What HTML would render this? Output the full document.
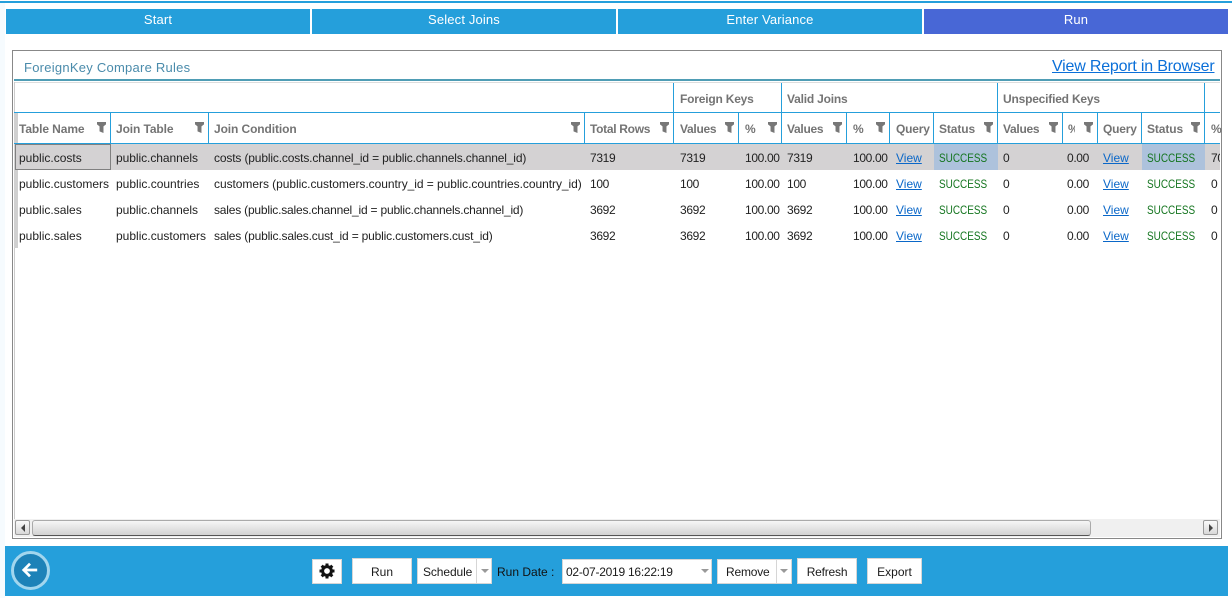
<!DOCTYPE html>
<html><head><meta charset="utf-8"><style>
html,body{margin:0;padding:0;background:#fff}
#p{position:relative;width:1232px;height:598px;overflow:hidden;background:#fff;font-family:"Liberation Sans",sans-serif;font-size:12px;color:#222}
#p div,#p span,#p a{position:absolute;white-space:nowrap}
.tab{top:9px;height:25px;line-height:21px;text-align:center;color:#fff;font-size:13px;letter-spacing:.15px;background:#259fdb}
.l{background:#259fdb;width:1px}
.h{font-weight:bold;color:#747474;top:121px;line-height:16px;letter-spacing:-.1px}
.g{font-weight:bold;color:#747474;top:91px;line-height:16px;letter-spacing:-.2px}
.f{top:122px;width:9px;height:11px;background:#777;clip-path:polygon(0 0,100% 0,100% 22%,72% 40%,72% 100%,28% 85%,28% 40%,0 22%)}
.c{line-height:16px;color:#222}
.d{line-height:16px;color:#222;letter-spacing:-.35px}
.v{color:#0a67c8;text-decoration:underline;line-height:16px}
.s{color:#14751f;line-height:16px;font-size:12px;transform:scaleX(.83);transform-origin:0 50%}
.b{background:#fff;border:1px solid #d6d6d6;box-sizing:border-box;text-align:center;line-height:26px;color:#1a1a1a}
</style></head><body><div id="p">
<div style="left:0;top:1px;width:1232px;height:2px;background:#259fdb"></div>
<div style="left:0;top:3px;width:5px;height:595px;background:#f6fbfe"></div>
<div class="tab" style="left:6px;width:304px">Start</div>
<div class="tab" style="left:312px;width:304px">Select Joins</div>
<div class="tab" style="left:618px;width:304px">Enter Variance</div>
<div class="tab" style="left:924px;width:304px;background:#4867d6">Run</div>

<div style="left:12px;top:50px;width:1208px;height:487px;border:1px solid #888"></div>
<div style="left:24px;top:59px;font-size:13px;letter-spacing:.25px;line-height:17px;color:#4a8bab">ForeignKey Compare Rules</div>
<a style="left:1052px;top:57px;font-size:16px;letter-spacing:-.2px;line-height:19px;color:#0a6fd8;text-decoration:underline">View Report in Browser</a>
<div style="left:14px;top:79px;width:1206px;height:2px;background:#4f9db5"></div>
<div style="left:14px;top:82px;width:1206px;height:1px;background:#ddd"></div>
<div style="left:14px;top:82px;width:1px;height:455px;background:#ccc"></div>

<div style="left:14px;top:113px;width:4px;height:135px;background:#d0d0d0"></div>
<div style="left:14px;top:112px;width:1206px;height:1px;background:#259fdb"></div>
<div style="left:14px;top:143px;width:1206px;height:1px;background:#259fdb"></div>
<div class="l" style="left:673px;top:83px;height:60px"></div>
<div class="l" style="left:781px;top:83px;height:60px"></div>
<div class="l" style="left:997px;top:83px;height:60px"></div>
<div class="l" style="left:1204px;top:83px;height:60px"></div>
<div class="l" style="left:110px;top:113px;height:30px"></div>
<div class="l" style="left:208px;top:113px;height:30px"></div>
<div class="l" style="left:584px;top:113px;height:30px"></div>
<div class="l" style="left:738px;top:113px;height:30px"></div>
<div class="l" style="left:846px;top:113px;height:30px"></div>
<div class="l" style="left:889px;top:113px;height:30px"></div>
<div class="l" style="left:933px;top:113px;height:30px"></div>
<div class="l" style="left:1062px;top:113px;height:30px"></div>
<div class="l" style="left:1097px;top:113px;height:30px"></div>
<div class="l" style="left:1141px;top:113px;height:30px"></div>

<div class="g" style="left:680px">Foreign Keys</div>
<div class="g" style="left:787px">Valid Joins</div>
<div class="g" style="left:1003px">Unspecified Keys</div>

<div class="h" style="left:19px">Table Name</div><div class="f" style="left:97px"></div>
<div class="h" style="left:116px">Join Table</div><div class="f" style="left:195px"></div>
<div class="h" style="left:214px">Join Condition</div><div class="f" style="left:571px"></div>
<div class="h" style="left:590px;letter-spacing:-.3px">Total Rows</div><div class="f" style="left:660px"></div>
<div class="h" style="left:680px;letter-spacing:-.3px">Values</div><div class="f" style="left:725px"></div>
<div class="h" style="left:745px">%</div><div class="f" style="left:768px"></div>
<div class="h" style="left:787px;letter-spacing:-.3px">Values</div><div class="f" style="left:833px"></div>
<div class="h" style="left:853px">%</div><div class="f" style="left:876px"></div>
<div class="h" style="left:896px;letter-spacing:-.2px">Query</div>
<div class="h" style="left:939px">Status</div><div class="f" style="left:984px"></div>
<div class="h" style="left:1003px;letter-spacing:-.3px">Values</div><div class="f" style="left:1049px"></div>
<div class="h" style="left:1068px;width:7px;overflow:hidden">%</div><div class="f" style="left:1084px"></div>
<div class="h" style="left:1103px;letter-spacing:-.2px">Query</div>
<div class="h" style="left:1147px">Status</div><div class="f" style="left:1191px"></div>
<div class="h" style="left:1211px">%</div>

<div style="left:15px;top:144px;width:1205px;height:26px;background:#d4d2d3"></div>
<div style="left:934px;top:144px;width:64px;height:26px;background:#adc2dc"></div>
<div style="left:1142px;top:144px;width:63px;height:26px;background:#adc2dc"></div>
<div style="left:15px;top:144px;width:94px;height:24px;border:1px solid #808080"></div>

<div class="c" style="left:19px;top:150px">public.costs</div>
<div class="c" style="left:116px;top:150px;letter-spacing:-.05px">public.channels</div>
<div class="c" style="left:214px;top:150px;letter-spacing:-.15px">costs (public.costs.channel_id = public.channels.channel_id)</div>
<div class="d" style="left:590px;top:150px">7319</div>
<div class="d" style="left:680px;top:150px">7319</div>
<div class="d" style="left:745px;top:150px">100.00</div>
<div class="d" style="left:787px;top:150px">7319</div>
<div class="d" style="left:853px;top:150px">100.00</div>
<a class="v" style="left:896px;top:150px">View</a>
<div class="s" style="left:939px;top:150px">SUCCESS</div>
<div class="d" style="left:1003px;top:150px">0</div>
<div class="d" style="left:1067px;top:150px">0.00</div>
<a class="v" style="left:1103px;top:150px">View</a>
<div class="s" style="left:1147px;top:150px">SUCCESS</div>
<div class="d" style="left:1211px;top:150px;width:9px;overflow:hidden">70</div>

<div class="c" style="left:19px;top:176px">public.customers</div>
<div class="c" style="left:116px;top:176px">public.countries</div>
<div class="c" style="left:214px;top:176px;letter-spacing:-.05px">customers (public.customers.country_id = public.countries.country_id)</div>
<div class="d" style="left:590px;top:176px">100</div>
<div class="d" style="left:680px;top:176px">100</div>
<div class="d" style="left:745px;top:176px">100.00</div>
<div class="d" style="left:787px;top:176px">100</div>
<div class="d" style="left:853px;top:176px">100.00</div>
<a class="v" style="left:896px;top:176px">View</a>
<div class="s" style="left:939px;top:176px">SUCCESS</div>
<div class="d" style="left:1003px;top:176px">0</div>
<div class="d" style="left:1067px;top:176px">0.00</div>
<a class="v" style="left:1103px;top:176px">View</a>
<div class="s" style="left:1147px;top:176px">SUCCESS</div>
<div class="d" style="left:1211px;top:176px">0</div>

<div class="c" style="left:19px;top:202px">public.sales</div>
<div class="c" style="left:116px;top:202px;letter-spacing:-.05px">public.channels</div>
<div class="c" style="left:214px;top:202px;letter-spacing:-.2px">sales (public.sales.channel_id = public.channels.channel_id)</div>
<div class="d" style="left:590px;top:202px">3692</div>
<div class="d" style="left:680px;top:202px">3692</div>
<div class="d" style="left:745px;top:202px">100.00</div>
<div class="d" style="left:787px;top:202px">3692</div>
<div class="d" style="left:853px;top:202px">100.00</div>
<a class="v" style="left:896px;top:202px">View</a>
<div class="s" style="left:939px;top:202px">SUCCESS</div>
<div class="d" style="left:1003px;top:202px">0</div>
<div class="d" style="left:1067px;top:202px">0.00</div>
<a class="v" style="left:1103px;top:202px">View</a>
<div class="s" style="left:1147px;top:202px">SUCCESS</div>
<div class="d" style="left:1211px;top:202px">0</div>

<div class="c" style="left:19px;top:228px">public.sales</div>
<div class="c" style="left:116px;top:228px">public.customers</div>
<div class="c" style="left:214px;top:228px;letter-spacing:-.18px">sales (public.sales.cust_id = public.customers.cust_id)</div>
<div class="d" style="left:590px;top:228px">3692</div>
<div class="d" style="left:680px;top:228px">3692</div>
<div class="d" style="left:745px;top:228px">100.00</div>
<div class="d" style="left:787px;top:228px">3692</div>
<div class="d" style="left:853px;top:228px">100.00</div>
<a class="v" style="left:896px;top:228px">View</a>
<div class="s" style="left:939px;top:228px">SUCCESS</div>
<div class="d" style="left:1003px;top:228px">0</div>
<div class="d" style="left:1067px;top:228px">0.00</div>
<a class="v" style="left:1103px;top:228px">View</a>
<div class="s" style="left:1147px;top:228px">SUCCESS</div>
<div class="d" style="left:1211px;top:228px">0</div>

<div style="left:14px;top:519px;width:1206px;height:18px;background:#f0f0f0"></div>
<div style="left:15px;top:520px;width:15px;height:15px;box-sizing:border-box;border:1px solid #999;border-radius:2px;background:linear-gradient(#fafafa,#d8d8d8)"></div>
<div style="left:21px;top:524px;width:0;height:0;border:4px solid transparent;border-left:0;border-right:4px solid #444"></div>
<div style="left:32px;top:520px;width:1059px;height:16px;box-sizing:border-box;border:1px solid #aaa;border-bottom:1px solid #555;border-radius:3px;background:linear-gradient(#f6f6f6,#d2d2d2)"></div>
<div style="left:1203px;top:520px;width:15px;height:15px;box-sizing:border-box;border:1px solid #999;border-radius:2px;background:linear-gradient(#fafafa,#d8d8d8)"></div>
<div style="left:1209px;top:524px;width:0;height:0;border:4px solid transparent;border-right:0;border-left:4px solid #444"></div>

<div style="left:5px;top:546px;width:1223px;height:50px;background:#259fdb"></div>
<div style="left:11px;top:551px;width:39px;height:39px;box-sizing:border-box;border:3px solid #a2d6ee;border-radius:50%;background:#1d82b8"></div>
<svg style="position:absolute;left:21px;top:561px" width="18" height="18" viewBox="0 0 20 20"><path d="M3 10H18M10 3L3 10L10 17" fill="none" stroke="#fff" stroke-width="3"/></svg>

<div class="b" style="left:312px;top:559px;width:30px;height:25px"></div>
<svg style="position:absolute;left:319px;top:563px" width="16" height="16" viewBox="0 0 16 16"><circle cx="8" cy="8" r="4.4" fill="none" stroke="#111" stroke-width="3"/><path d="M8 0.5V3.5M8 12.5V15.5M0.5 8H3.5M12.5 8H15.5M2.7 2.7L4.8 4.8M11.2 11.2L13.3 13.3M13.3 2.7L11.2 4.8M4.8 11.2L2.7 13.3" stroke="#111" stroke-width="3"/></svg>
<div class="b" style="left:352px;top:558px;width:60px;height:26px">Run</div>
<div class="b" style="left:417px;top:558px;width:75px;height:26px;text-align:left;padding-left:5px;letter-spacing:-.1px">Schedule</div>
<div style="left:476px;top:559px;width:1px;height:24px;background:#d6d6d6"></div>
<div style="left:481px;top:569px;width:0;height:0;border:4px solid transparent;border-bottom:0;border-top:4px solid #999"></div>
<div style="left:497px;top:564px;line-height:16px;color:#111">Run Date :</div>
<div class="b" style="left:562px;top:559px;width:150px;height:25px;text-align:left;padding-left:3px;line-height:24px;letter-spacing:-.25px">02-07-2019 16:22:19</div>
<div style="left:701px;top:569px;width:0;height:0;border:4px solid transparent;border-bottom:0;border-top:4px solid #999"></div>
<div class="b" style="left:717px;top:559px;width:75px;height:25px;text-align:left;padding-left:8px;line-height:24px;letter-spacing:-.2px">Remove</div>
<div style="left:776px;top:560px;width:1px;height:23px;background:#d6d6d6"></div>
<div style="left:780px;top:569px;width:0;height:0;border:4px solid transparent;border-bottom:0;border-top:4px solid #999"></div>
<div class="b" style="left:797px;top:558px;width:60px;height:26px;letter-spacing:-.2px">Refresh</div>
<div class="b" style="left:867px;top:558px;width:55px;height:26px">Export</div>
</div></body></html>
